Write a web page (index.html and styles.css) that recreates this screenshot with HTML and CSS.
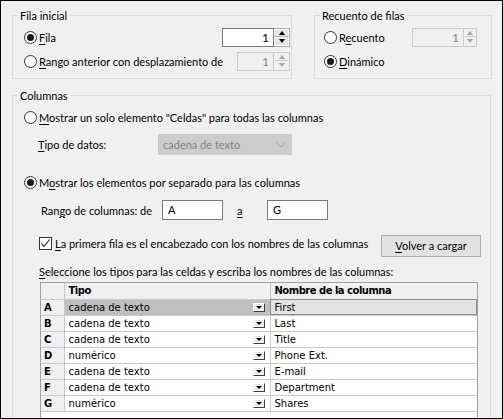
FILE: index.html
```html
<!DOCTYPE html>
<html lang="es">
<head>
    <meta charset="UTF-8">
    <title>Opciones de filas y columnas</title>
    <link rel="stylesheet" href="styles.css">
</head>
<body>
    <div class="dialog">
        <div class="top">
            <fieldset class="group group-start">
                <legend>Fila inicial</legend>
                <div class="group-body">
                    <div class="row">
                        <span class="radio on"></span>
                        <span class="label"><u>F</u>ila</span>
                        <div class="spin">
                            <span class="spin-val w52">1</span>
                            <span class="spin-btns"><span class="up"></span><span class="down"></span></span>
                        </div>
                    </div>
                    <div class="row">
                        <span class="radio"></span>
                        <span class="label"><u>R</u>ango anterior con desplazamiento de</span>
                        <div class="spin disabled">
                            <span class="spin-val w37">1</span>
                            <span class="spin-btns"><span class="up"></span><span class="down"></span></span>
                        </div>
                    </div>
                </div>
            </fieldset>
            <fieldset class="group group-count">
                <legend>Recuento de filas</legend>
                <div class="group-body">
                    <div class="row">
                        <span class="radio"></span>
                        <span class="label">R<u>e</u>cuento</span>
                        <div class="spin disabled">
                            <span class="spin-val w52">1</span>
                            <span class="spin-btns narrow"><span class="up"></span><span class="down"></span></span>
                        </div>
                    </div>
                    <div class="row">
                        <span class="radio on"></span>
                        <span class="label"><u>D</u>inámico</span>
                    </div>
                </div>
            </fieldset>
        </div>

        <fieldset class="group group-cols">
            <legend>Columnas</legend>
            <div class="group-body">
                <div class="row">
                    <span class="radio"></span>
                    <span class="label"><u>M</u>ostrar un solo elemento "Celdas" para todas las columnas</span>
                </div>
                <div class="type-row">
                    <span class="field-label"><u>T</u>ipo de datos:</span>
                    <div class="select disabled">
                        <span>cadena de texto</span>
                        <svg width="10" height="6" viewBox="0 0 10 6"><polyline points="0.5,0.5 5,5 9.5,0.5" fill="none" stroke="#a8a8a8" stroke-width="1"/></svg>
                    </div>
                </div>
                <div class="row row-sep">
                    <span class="radio on"></span>
                    <span class="label">M<u>o</u>strar los elementos por separado para las columnas</span>
                </div>
                <div class="range-row">
                    <span class="range-label">Ran<u>g</u>o de columnas: de</span>
                    <span class="text-input">A</span>
                    <span class="range-to"><u>a</u></span>
                    <span class="text-input">G</span>
                </div>
                <div class="check-row">
                    <span class="checkbox">
                        <svg width="11" height="11" viewBox="0 0 11 11"><polyline points="1.5,5.5 4,8.5 9.5,1.5" fill="none" stroke="#3c3c3c" stroke-width="1.2"/></svg>
                    </span>
                    <span class="label"><u>L</u>a primera fila es el encabezado con los nombres de las columnas</span>
                    <span class="button"><u>V</u>olver a cargar</span>
                </div>
                <div class="hint"><u>S</u>eleccione los tipos para las celdas y escriba los nombres de las columnas:</div>
                <div class="grid">
                    <table>
                        <colgroup>
                            <col class="c-hdr">
                            <col class="c-type">
                            <col class="c-name">
                        </colgroup>
                        <thead>
                            <tr><th></th><th>Tipo</th><th>Nombre de la columna</th></tr>
                        </thead>
                        <tbody>
                            <tr class="current"><th>A</th><td><div class="cell-type"><span>cadena de texto</span><span class="drop"></span></div></td><td>First</td></tr>
                            <tr><th>B</th><td><div class="cell-type"><span>cadena de texto</span><span class="drop"></span></div></td><td>Last</td></tr>
                            <tr><th>C</th><td><div class="cell-type"><span>cadena de texto</span><span class="drop"></span></div></td><td>Title</td></tr>
                            <tr><th>D</th><td><div class="cell-type"><span>numérico</span><span class="drop"></span></div></td><td>Phone Ext.</td></tr>
                            <tr><th>E</th><td><div class="cell-type"><span>cadena de texto</span><span class="drop"></span></div></td><td>E-mail</td></tr>
                            <tr><th>F</th><td><div class="cell-type"><span>cadena de texto</span><span class="drop"></span></div></td><td>Department</td></tr>
                            <tr><th>G</th><td><div class="cell-type"><span>numérico</span><span class="drop"></span></div></td><td>Shares</td></tr>
                        </tbody>
                    </table>
                </div>
            </div>
        </fieldset>
    </div>
</body>
</html>
```

FILE: styles.css
```css
* {
    box-sizing: border-box;
}
body {
    margin: 0;
    font-family: Lato, "Liberation Sans", sans-serif;
    font-size: 11px;
    color: #000;
}
u {
    text-decoration-thickness: 1px;
    text-underline-offset: 2px;
}
.dialog {
    width: 503px;
    height: 419px;
    border: 1px solid #000;
    background-color: #f0f0f0;
    overflow: hidden;
    padding-top: 7px;
}
.top {
    display: flex;
    gap: 22px;
    padding-left: 11px;
}

/* group boxes */
.group {
    margin: 0;
    padding: 0;
    border: 1px solid #dcdcdc;
    min-width: 0;
}
.group legend {
    margin-left: 5px;
    padding: 0 2px;
    line-height: 15px;
}
.group-start {
    width: 280px;
}
.group-start .group-body {
    padding: 2px 1px 5px 11px;
}
.group-count {
    width: 178px;
}
.group-count .group-body {
    padding: 2px 14px 5px 9px;
}
.group-cols {
    width: 479px;
    height: 340px;
    margin: 9px 0 0 11px;
}
.group-cols .group-body {
    padding: 2px 0 0 11px;
}

.row {
    display: flex;
    align-items: center;
    height: 24px;
}
.label {
    margin-left: 2px;
    white-space: nowrap;
}

/* radio & checkbox */
.radio {
    width: 13px;
    height: 13px;
    flex-shrink: 0;
    border: 1px solid #333;
    border-radius: 50%;
    background-color: #fff;
    display: flex;
    align-items: center;
    justify-content: center;
}
.radio.on::after {
    content: "";
    width: 7px;
    height: 7px;
    border-radius: 50%;
    background-color: #1a1a1a;
}
.checkbox {
    width: 13px;
    height: 13px;
    flex-shrink: 0;
    border: 1px solid #333;
    background-color: #fff;
    display: flex;
    align-items: center;
    justify-content: center;
}

/* spin boxes */
.spin {
    display: flex;
    height: 19px;
    margin-left: auto;
}
.spin-val {
    height: 19px;
    border: 1px solid #7a7a7a;
    background-color: #fff;
    text-align: right;
    padding-right: 4px;
    line-height: 17px;
    font-size: 12px;
}
.w52 {
    width: 52px;
}
.w37 {
    width: 37px;
}
.spin-btns {
    display: flex;
    flex-direction: column;
    width: 16px;
    border: 1px solid #adadad;
    border-left: none;
}
.spin-btns.narrow {
    width: 13px;
}
.spin-btns span {
    flex: 1;
    display: flex;
    align-items: center;
    justify-content: center;
    background-color: #e5e5e5;
    border: 1px solid #fff;
}
.spin-btns .up {
    border-bottom-color: #adadad;
}
.spin-btns .up::before,
.spin-btns .down::before {
    content: "";
    border-left: 3.5px solid transparent;
    border-right: 3.5px solid transparent;
}
.spin-btns .up::before {
    border-bottom: 4px solid #000;
}
.spin-btns .down::before {
    border-top: 4px solid #000;
}
.spin.disabled .spin-val {
    border-color: #cccccc;
    background-color: #f0f0f0;
    color: #838383;
}
.spin.disabled .spin-btns {
    border-color: #cccccc;
}
.spin.disabled .spin-btns span {
    background-color: #f0f0f0;
    border-color: #f0f0f0;
}
.spin.disabled .spin-btns .up {
    border-bottom-color: #cccccc;
}
.spin.disabled .spin-btns .up::before {
    border-bottom-color: #a6a6a6;
}
.spin.disabled .spin-btns .down::before {
    border-top-color: #a6a6a6;
}

/* columns section */
.type-row {
    display: flex;
    align-items: center;
    height: 21px;
    margin: 5px 0 0 14px;
}
.field-label {
    width: 120px;
}
.select {
    width: 134px;
    height: 21px;
    display: flex;
    align-items: center;
    justify-content: space-between;
    padding: 0 5px 0 4px;
    border: 1px solid #cccccc;
    background-color: #cccccc;
    color: #838383;
}
.row-sep {
    margin-top: 15px;
}
.range-row {
    display: flex;
    align-items: center;
    height: 20px;
    margin: 6px 0 0 17px;
}
.range-label {
    width: 121px;
    white-space: nowrap;
}
.text-input {
    width: 61px;
    height: 20px;
    border: 1px solid #7a7a7a;
    background-color: #fff;
    padding-left: 5px;
    line-height: 18px;
}
.range-to {
    width: 44px;
    padding-left: 14px;
}
.check-row {
    display: flex;
    align-items: flex-start;
    height: 22px;
    margin: 15px 0 0 15px;
}
.check-row .checkbox {
    margin-top: 2px;
}
.check-row .label {
    margin-left: 3px;
    line-height: 17px;
}
.button {
    margin-left: auto;
    margin-right: 9px;
    width: 100px;
    height: 22px;
    border: 1px solid #adadad;
    background-color: #e1e1e1;
    text-align: center;
    line-height: 20px;
}
.hint {
    margin: 8px 0 0 15px;
    line-height: 14px;
}

/* data grid */
.grid {
    width: 438px;
    height: 140px;
    margin: 3px 0 0 16px;
    border: 1px solid #a0a0a0;
    background-color: #fff;
}
.grid table {
    border-collapse: collapse;
    table-layout: fixed;
    width: 436px;
    font-family: "DejaVu Sans", Verdana, sans-serif;
    font-size: 10px;
}
.c-hdr {
    width: 23px;
}
.c-type {
    width: 206px;
}
.c-name {
    width: 207px;
}
.grid th,
.grid td {
    height: 16px;
    padding: 0 0 0 4px;
    border-right: 1px solid #c8c8c8;
    border-bottom: 1px solid #c8c8c8;
    text-align: left;
    white-space: nowrap;
    overflow: hidden;
}
.grid th {
    background-color: #f0f0f0;
    font-weight: bold;
    letter-spacing: -0.5px;
}
.grid tbody th {
    padding-left: 3px;
}
.grid td:last-child,
.grid th:last-child {
    border-right: none;
}
.cell-type {
    display: flex;
    align-items: center;
    justify-content: space-between;
    padding-right: 5px;
}
.drop {
    width: 12px;
    height: 9px;
    display: flex;
    align-items: center;
    justify-content: center;
    background-color: #f0f0f0;
    border: 1px solid;
    border-color: #fff #404040 #404040 #fff;
}
.drop::before {
    content: "";
    border-left: 3px solid transparent;
    border-right: 3px solid transparent;
    border-top: 3px solid #000;
}
.grid tr.current td:first-of-type {
    background-color: #bfbfbf;
}
.grid tr.current td:last-child {
    background-color: #e3e3e3;
    outline: 1px solid #8c8c8c;
    outline-offset: -1px;
}
```
